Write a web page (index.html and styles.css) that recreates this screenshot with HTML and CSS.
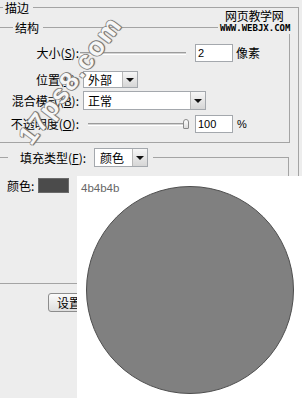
FILE: index.html
```html
<!DOCTYPE html>
<html>
<head>
<meta charset="utf-8">
<title>描边</title>
<link rel="stylesheet" href="styles.css">
</head>
<body>
<div class="dialog">
  <fieldset class="outer">
    <legend class="title t-outer">描边</legend>
    <fieldset class="struct">
      <legend class="title t-struct">结构</legend>
      <div class="row r1">
        <span class="lbl">大小(<u>S</u>):</span>
        <span class="track tr1"></span>
        <span class="input in1">2</span>
        <span class="unit">像素</span>
      </div>
      <div class="row r2">
        <span class="lbl">位置(<u>P</u>):</span>
        <span class="combo c-pos"><span class="val">外部</span><span class="arrow"></span></span>
      </div>
      <div class="row r3">
        <span class="lbl">混合模式(<u>B</u>):</span>
        <span class="combo c-mode"><span class="val">正常</span><span class="arrow"></span></span>
      </div>
      <div class="row r4">
        <span class="lbl">不透明度(<u>O</u>):</span>
        <span class="track tr4"></span><span class="thumb"></span>
        <span class="input in4">100</span>
        <span class="unit pct">%</span>
      </div>
    </fieldset>
    <fieldset class="fill">
      <legend class="fill-legend">
        <span class="lbl2">填充类型(<u>F</u>):</span>
        <span class="combo c-fill"><span class="val">颜色</span><span class="arrow"></span></span>
      </legend>
      <div class="color-row">
        <span class="clbl">颜色:</span>
        <span class="swatch"></span>
      </div>
    </fieldset>
    <button class="btn" type="button">设置...</button>
  </fieldset>

  <div class="canvas">
    <span class="hex">4b4b4b</span>
    <div class="circle"></div>
  </div>

  <div class="wm-site">
    <div class="wm-cn">网页教学网</div>
    <div class="wm-en">WWW.WEBJX.COM</div>
  </div>
  <div class="wm-diag">17ps8.com</div>
</div>
</body>
</html>
```

FILE: styles.css
```css
* { box-sizing: border-box; }
html, body { margin: 0; padding: 0; }
body {
  background: #ededed;
  font-family: "Noto Sans CJK SC", "Liberation Sans", sans-serif;
  font-size: 12px;
  color: #000;
}
.dialog {
  position: relative;
  width: 302px;
  height: 398px;
  overflow: hidden;
  background: #ededed;
}
fieldset {
  border: 1px solid #a4a4a4;
  min-width: 0;
  margin: 0;
}
.title {
  padding: 0 2px;
  height: 15px;
  line-height: 15px;
  font-size: 12px;
}
.outer {
  margin: 0 3px 0 -10px;
  padding: 0 0 0 11px;
  height: 470px;
}
.t-outer { margin-left: 1px; padding-right: 4px; }

.struct {
  margin: 5px 8px 0 -9px;
  padding: 0 0 9px 6px;
}
.t-struct { margin-left: 13px; padding-right: 4px; }

.row { display: flex; align-items: center; }
.lbl {
  flex: none;
  width: 79px;
  text-align: right;
  line-height: 14px;
  white-space: nowrap;
}
u { text-decoration: underline; text-underline-offset: 1px; }
.r1 { margin-top: 9px; height: 18px; }
.r2 { margin-top: 9px; height: 17px; }
.r3 { margin-top: 3px; height: 19px; }
.r4 { margin-top: 5px; height: 18px; }

.track {
  flex: none;
  height: 3px;
  border-top: 1px solid #9c9c9c;
  border-bottom: 1px solid #ffffff;
  background: #d4d4d4;
}
.tr1 { width: 106px; margin-left: 1px; }
.tr4 { width: 95px; margin-left: 9px; }
.thumb {
  flex: none;
  width: 6px;
  height: 10px;
  border: 1px solid #8a8a8a;
  border-radius: 3px 3px 1px 1px;
  background: linear-gradient(#ffffff, #dcdcdc);
}
.input {
  flex: none;
  width: 38px;
  height: 18px;
  border: 1px solid #a4a8ad;
  background: #fff;
  font-family: "Liberation Sans", sans-serif;
  font-size: 11px;
  line-height: 16px;
  padding-left: 2px;
}
.in1 { margin-left: 9px; }
.in4 { margin-left: 6px; }
.unit { margin-left: 3px; line-height: 14px; }
.pct {
  margin-left: 4px;
  font-family: "Liberation Sans", sans-serif;
  font-size: 11px;
}

.combo {
  flex: none;
  display: flex;
  border: 1px solid #a4a8ad;
  background: #fff;
}
.val { flex: 1; padding-left: 4px; line-height: 15px; white-space: nowrap; }
.arrow {
  flex: none;
  width: 15px;
  position: relative;
  border-left: 1px solid #b8b8b8;
  background: linear-gradient(#f6f6f6, #d6d6d6);
}
.arrow::after {
  content: "";
  position: absolute;
  left: 3px;
  top: 50%;
  margin-top: -2px;
  border-left: 4px solid transparent;
  border-right: 4px solid transparent;
  border-top: 4px solid #111;
}
.c-pos { width: 55px; height: 17px; margin-left: 4px; }
.c-mode { width: 123px; height: 19px; margin-left: 4px; }
.c-mode .val { line-height: 17px; }

.fill {
  margin: 5px 9px 0 -9px;
  padding: 0 0 90px 13px;
}
.fill-legend {
  display: flex;
  align-items: center;
  height: 19px;
  margin-left: 1px;
  padding: 0 5px 0 0;
}
.lbl2 { margin-left: 12px; line-height: 14px; white-space: nowrap; }
.c-fill { width: 54px; height: 19px; margin-left: 8px; }
.c-fill .val { padding-left: 5px; line-height: 17px; }

.color-row {
  display: flex;
  align-items: center;
  margin-top: 11px;
  height: 15px;
}
.clbl { line-height: 14px; }
.swatch {
  width: 31px;
  height: 15px;
  margin-left: 4px;
  background: #4b4b4b;
  border: 1px solid #6a6a6a;
}

.btn {
  display: block;
  margin: 9px 0 0 46px;
  width: 62px;
  height: 19px;
  padding: 0 0 0 8px;
  text-align: left;
  font-family: "Noto Sans CJK SC", sans-serif;
  font-size: 12px;
  line-height: 15px;
  color: #000;
  border: 1px solid #8c8c8c;
  border-radius: 3px;
  background: linear-gradient(#fbfbfb, #dedede);
}

.canvas {
  position: absolute;
  left: 77px;
  top: 176px;
  right: 0;
  bottom: 0;
  background: #fff;
  padding: 10px 0 0 9px;
}
.hex {
  position: absolute;
  left: 4px;
  top: 6px;
  font-family: "Liberation Sans", sans-serif;
  font-size: 11.5px;
  line-height: 12px;
  color: #666;
}
.circle {
  width: 208px;
  height: 208px;
  border-radius: 50%;
  background: #808080;
  border: 1px solid #4e4e4e;
}

.wm-site {
  position: absolute;
  left: 218px;
  top: 9px;
  width: 76px;
  height: 25px;
  background: #ededed;
}
.wm-cn {
  padding-left: 7px;
  font-size: 12px;
  line-height: 14px;
  letter-spacing: -0.3px;
}
.wm-en {
  padding-left: 2px;
  font-family: "DejaVu Sans Mono", monospace;
  font-weight: bold;
  font-size: 9px;
  line-height: 9px;
  margin-top: 1px;
}
.wm-diag {
  position: absolute;
  left: 70px;
  top: 80px;
  transform: translate(-50%, -50%) rotate(-53deg);
  font-family: "Liberation Sans", sans-serif;
  font-weight: bold;
  font-size: 26px;
  letter-spacing: 2px;
  line-height: 26px;
  white-space: nowrap;
  color: #f6f6f6;
  text-shadow: 1px 0 #7a7a7a, -1px 0 #8a8a8a, 0 1px #7a7a7a, 0 -1px #8a8a8a, 1px 1px 1px #666;
}
```
